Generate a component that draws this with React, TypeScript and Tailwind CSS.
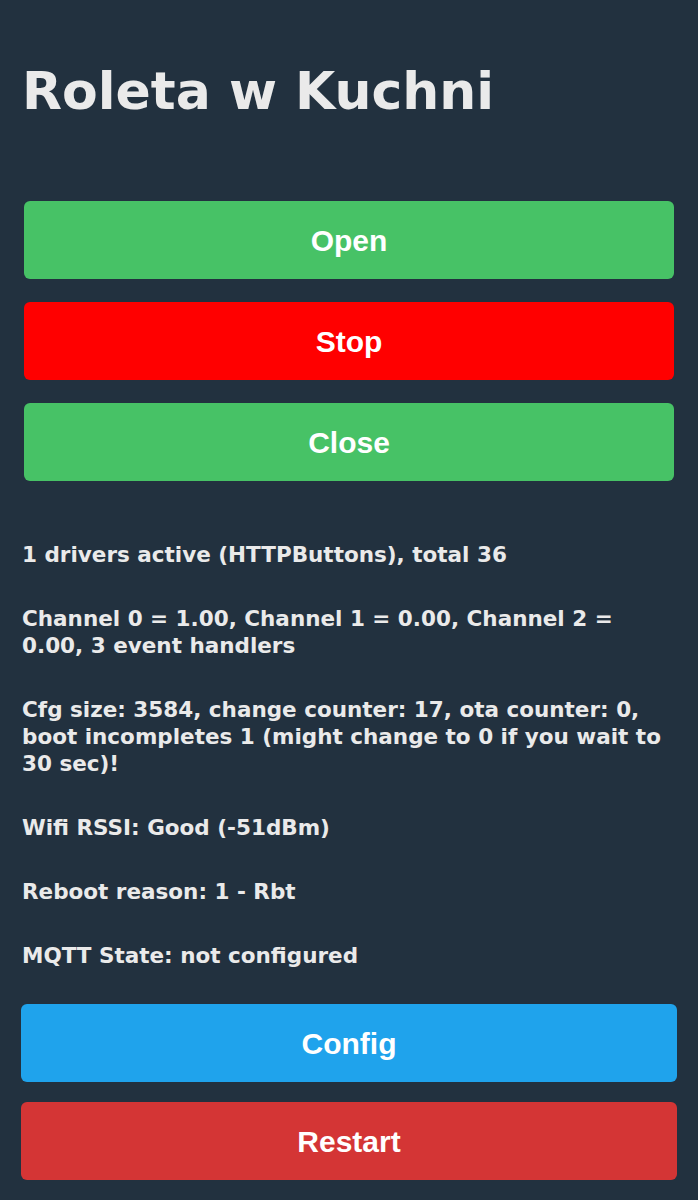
export default function App() {
  const info = [
    "1 drivers active (HTTPButtons), total 36",
    "Channel 0 = 1.00, Channel 1 = 0.00, Channel 2 = 0.00, 3 event handlers",
    "Cfg size: 3584, change counter: 17, ota counter: 0, boot incompletes 1 (might change to 0 if you wait to 30 sec)!",
    "Wifi RSSI: Good (-51dBm)",
    "Reboot reason: 1 - Rbt",
    "MQTT State: not configured",
  ];

  const btn =
    "h-[78px] rounded-[6px] text-[30px] font-bold text-white [font-family:'Liberation_Sans',Arial,sans-serif]";

  return (
    <main className="min-h-[1200px] overflow-hidden bg-[#22313f] px-[21px] pt-[61px] text-[#eaeaea] [font-family:'DejaVu_Sans',Verdana,sans-serif]">
      <h1 className="h-[60px] pl-[1px] text-[52px] font-bold leading-[60px]">
        Roleta w Kuchni
      </h1>

      {/* shutter controls */}
      <div className="mt-[80px] flex flex-col gap-[23px] px-[3px]">
        <button className={`${btn} bg-[#47c266]`}>Open</button>
        <button className={`${btn} bg-[#ff0000]`}>Stop</button>
        <button className={`${btn} bg-[#47c266]`}>Close</button>
      </div>

      <div className="mt-[60px] flex flex-col gap-[37px] pl-[1px]">
        {info.map((line) => (
          <p key={line} className="text-[21.5px] font-bold leading-[27px]">
            {line}
          </p>
        ))}
      </div>

      <div className="mt-[35px] flex flex-col gap-[20px]">
        <button className={`${btn} bg-[#1fa3ec]`}>Config</button>
        <button className={`${btn} bg-[#d43535]`}>Restart</button>
        <div aria-hidden className="h-[78px] rounded-[6px] bg-[#1fa3ec]" />
      </div>
    </main>
  );
}
